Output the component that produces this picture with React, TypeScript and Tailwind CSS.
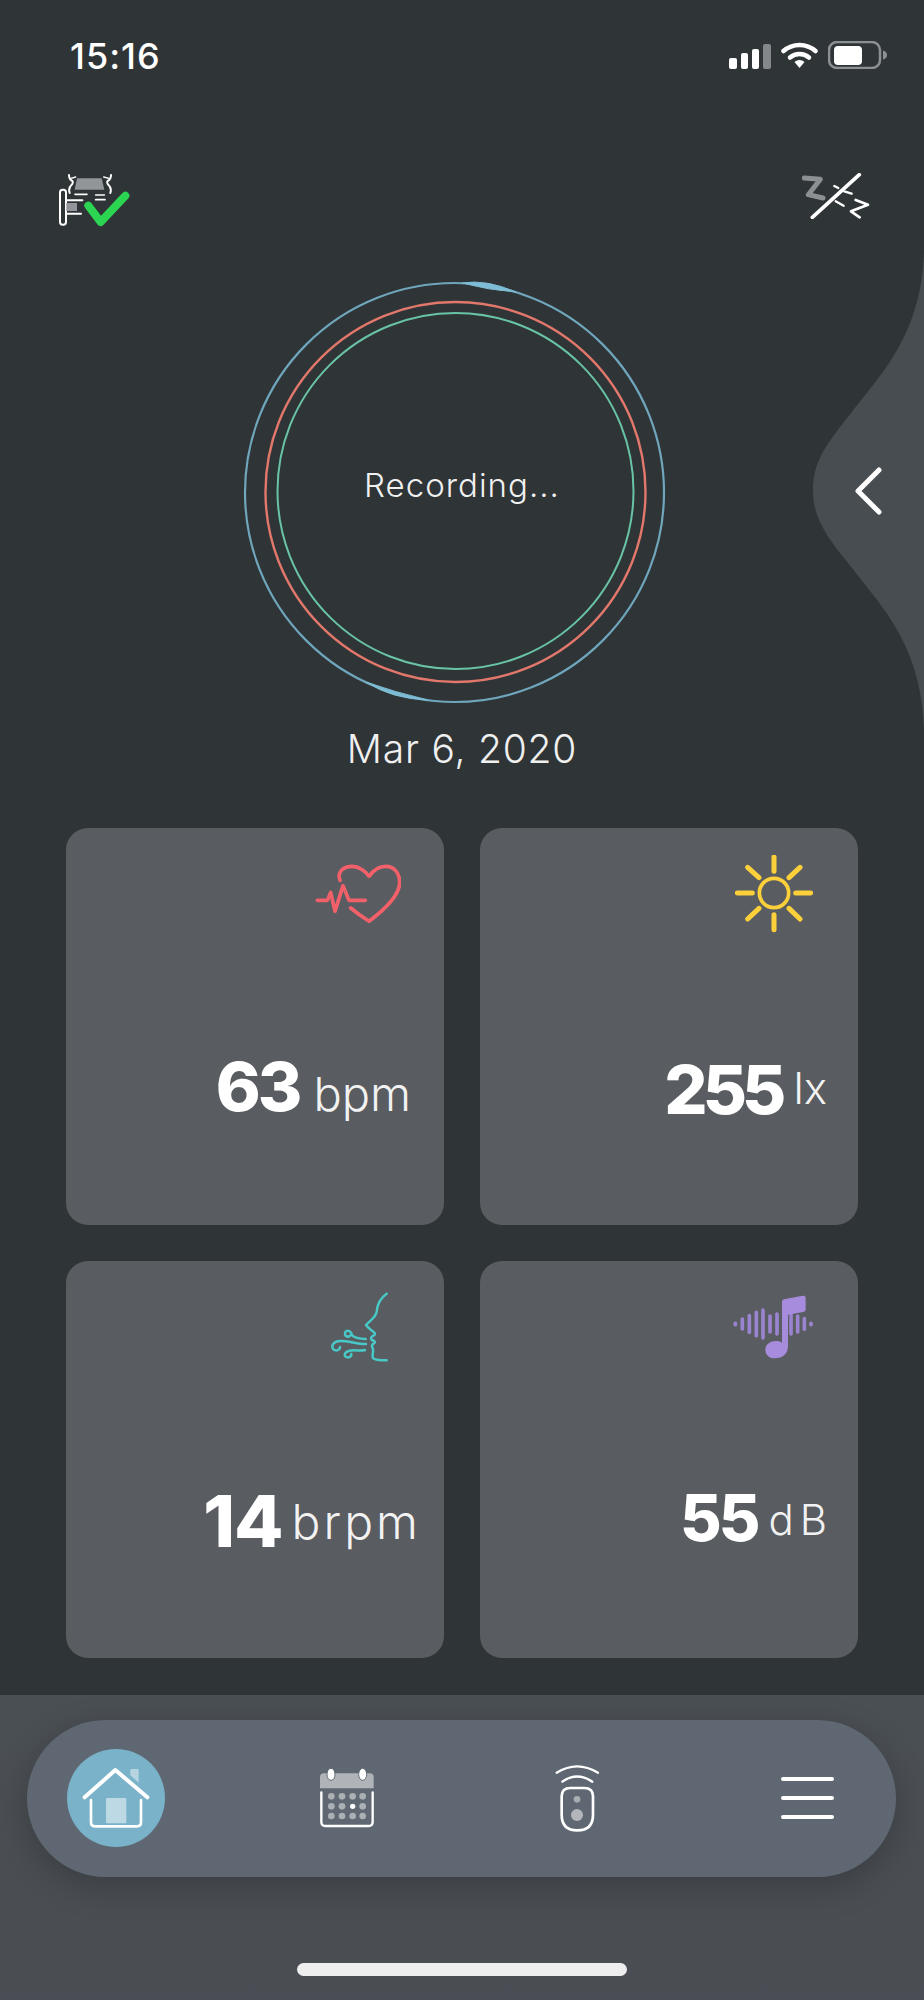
import React from "react";

const font = "[font-family:Inter,'Liberation_Sans',sans-serif]";

function StatusIcons() {
  return (
    <div className="flex items-center">
      <svg width="42" height="25" viewBox="0 0 42 25" className="mt-[2px]">
        <rect x="0" y="14" width="8" height="11" rx="2" fill="#fff" />
        <rect x="12" y="9" width="7" height="16" rx="2" fill="#fff" />
        <rect x="23" y="5" width="7" height="20" rx="2" fill="#fff" />
        <rect x="34" y="0" width="8" height="25" rx="2" fill="#85888b" />
      </svg>
      <svg width="37" height="26" viewBox="0 0 37 26" className="ml-[10px]">
        <path d="M2.5 9A24 24 0 0 1 34.500 9" stroke="#fff" strokeWidth="4.500" fill="none" strokeLinecap="round" />
        <path d="M9 15.500A14.500 14.500 0 0 1 28 15.500" stroke="#fff" strokeWidth="4.500" fill="none" strokeLinecap="round" />
        <path d="M18.500 26L13.500 20A7.500 7.500 0 0 1 23.500 20Z" fill="#fff" />
      </svg>
      <svg width="59" height="28" viewBox="0 0 59 28" className="ml-[10px]">
        <rect x="1" y="1" width="51" height="26" rx="8" stroke="#8d9093" strokeWidth="2.500" fill="none" />
        <rect x="6" y="5" width="28" height="19" rx="4" fill="#fff" />
        <path d="M55 9.500C58 10.500 59 12 59 14C59 16 58 17.500 55 18.500Z" fill="#8d9093" />
      </svg>
    </div>
  );
}

function BedCheck() {
  return (
    <svg width="74" height="58" viewBox="50 30 222 174" fill="none" strokeLinecap="round" strokeLinejoin="round">
      <path d="M110 52H184L192 86H103Z" fill="#929599" />
      <path d="M86 42C86 50 88 56 96 60C100 64 96 70 90 76C86 82 86 90 88 96" stroke="#fff" strokeWidth="6" />
      <path d="M212 42C212 50 210 56 202 60C198 64 202 70 208 76C212 82 212 90 210 96" stroke="#fff" strokeWidth="6" />
      <path d="M92 52L106 48M206 52L190 48" stroke="#fff" strokeWidth="4" />
      <path d="M104 100H140M166 102H192M166 116H194" stroke="#fff" strokeWidth="5" />
      <rect x="59" y="86" width="18" height="105" rx="8" stroke="#fff" strokeWidth="6" />
      <path d="M77 118H126M77 158H122" stroke="#fff" strokeWidth="6" />
      <rect x="78" y="126" width="32" height="24" fill="#929599" />
      <path d="M144 134L181 183L255 104" stroke="#2bd552" strokeWidth="24" />
    </svg>
  );
}

function SleepOff() {
  return (
    <svg width="68" height="46" viewBox="65 45 204 138" fill="none" strokeLinecap="round" strokeLinejoin="round">
      <path d="M72 60L120 64L84 110L128 120" stroke="#8c8f93" strokeWidth="15" />
      <path d="M96 178L237 50" stroke="#fff" strokeWidth="11" />
      <path d="M162 84L174 90M192 100L214 107M166 130L190 143" stroke="#fff" strokeWidth="7" />
      <path d="M226 126L263 140L212 160L238 178" stroke="#fff" strokeWidth="8" />
    </svg>
  );
}

function Rings() {
  return (
    <svg width="440" height="440" viewBox="235 273 440 440" fill="none" className="ml-[235px]">
      <circle cx="454.500" cy="492.500" r="209.500" stroke="#6fa6bc" strokeWidth="2.200" />
      <path d="M462 283Q486 279 516 292Q488 290 462 283Z" fill="#7dbcd4" stroke="#7dbcd4" strokeWidth="1" />
      <path d="M366 682Q392 699 428 700Q394 692 366 682Z" fill="#7dbcd4" stroke="#7dbcd4" strokeWidth="1" />
      <circle cx="455.500" cy="492" r="190" stroke="#e2786b" strokeWidth="2.400" />
      <circle cx="455.500" cy="491" r="178" stroke="#69c4a6" strokeWidth="2" />
    </svg>
  );
}

function Heart() {
  return (
    <svg width="86" height="60" viewBox="103 100 258 180" fill="none" stroke="#f2606a" strokeWidth="11" strokeLinecap="round" strokeLinejoin="round">
      <path d="M178 152C168 125 190 110 215 110C235 110 255 125 265 140C278 122 295 110 315 110C342 110 357 132 357 158C357 200 305 245 265 275C245 262 228 250 210 235" />
      <path d="M110 212H140L150 188L163 245L187 168L205 212H254" />
    </svg>
  );
}

function Sun() {
  return (
    <svg width="78" height="78" viewBox="103 78 234 234" fill="none" stroke="#fcd03a" strokeWidth="15" strokeLinecap="round">
      <circle cx="220" cy="192" r="44" strokeWidth="11" />
      <path d="M220 84V127M220 257V302M110 192H155M285 192H330M141 115L175 146M298 115L265 146M141 270L175 238M298 270L265 238" />
    </svg>
  );
}

function Breath() {
  return (
    <svg width="58" height="70" viewBox="90 66 174 210" fill="none" stroke="#48c8c6" strokeWidth="7.500" strokeLinecap="round" strokeLinejoin="round">
      <path d="M260 71C240 85 232 100 230 125C228 142 212 150 198 165C205 175 215 180 222 187C227 191 225 196 218 198C212 201 212 206 216 210C222 212 228 216 222 220C216 222 214 228 218 234C222 244 216 255 218 262C220 270 240 271 260 271" />
      <path d="M197 207C180 206 165 204 156 196C153 180 136 178 135 191C135 200 146 203 151 196" />
      <path d="M198 222C170 222 145 212 120 213C100 214 92 228 100 238C108 245 120 240 120 231" />
      <path d="M195 240C180 244 160 238 146 243C132 247 130 260 142 262C150 263 155 258 154 252" />
    </svg>
  );
}

function Music() {
  const bars: [number, number][] = [[76, 2], [97, 15], [118, 25], [139, 35], [159, 42], [180, 24], [201, 30], [243, 30], [263, 24], [283, 16], [303, 2]];
  return (
    <svg width="80" height="64" viewBox="69 46 240 192" fill="none">
      {bars.map(([x, h]) => (
        <path key={x} d={`M${x} ${133 - h}V${133 + h}`} stroke="#9a84d0" strokeWidth="11" strokeLinecap="round" />
      ))}
      <path d="M216 66Q216 60 222 59L278 48Q287 47 287 55V90Q287 96 280 97L234 105V200C234 222 218 236 195 236C176 236 166 224 166 210C166 194 182 184 198 184C206 184 212 186 216 189Z" fill="#a78bdc" />
    </svg>
  );
}

function HomeIcon() {
  return (
    <div className="w-[98px] h-[98px] rounded-full bg-[#7ab3c9]">
      <svg width="98" height="98" viewBox="200 205 294 294" fill="none" strokeLinecap="round" strokeLinejoin="round">
        <path d="M390 268Q390 265 394 265H411Q415 265 415 269V306L390 284Z" fill="#fff" fillOpacity="0.45" />
        <rect x="317" y="352" width="61" height="76" rx="3" fill="#fff" fillOpacity="0.5" />
        <path d="M272 358V425Q272 437 284 437H410Q422 437 422 425V358" stroke="#fff" strokeWidth="8" />
        <path d="M253 350L345 268L441 350" stroke="#fff" strokeWidth="12" />
      </svg>
    </div>
  );
}

function CalendarIcon() {
  const xs = [995, 1027, 1059, 1089];
  const ys = [347, 377, 406];
  return (
    <svg width="56" height="60" viewBox="958 262 168 180" fill="none">
      <path d="M961 323V290Q961 278 973 278H1110Q1122 278 1122 290V323Z" fill="#b0b4b8" />
      <path d="M965 335V424Q965 436 977 436H1107Q1119 436 1119 424V335" stroke="#fff" strokeWidth="7" strokeLinecap="round" />
      <ellipse cx="994" cy="281" rx="12" ry="18" fill="#fff" stroke="#5f6872" strokeWidth="3" />
      <ellipse cx="1089" cy="281" rx="12" ry="18" fill="#fff" stroke="#5f6872" strokeWidth="3" />
      {ys.map((y) => xs.map((x) => (
        <circle key={`${x}-${y}`} cx={x} cy={y} r={x === 1059 && y === 377 ? 8 : 10} fill={x === 1059 && y === 377 ? "#fff" : "#abb0b5"} />
      )))}
    </svg>
  );
}

function RemoteIcon() {
  return (
    <svg width="44" height="70" viewBox="284 245 132 210" fill="none" strokeLinecap="round">
      <path d="M289 274Q350 236 413 274" stroke="#fff" strokeWidth="7" />
      <path d="M306 301Q350 270 396 301" stroke="#fff" strokeWidth="7" />
      <path d="M304 345Q304 320 330 320H372Q398 320 398 345V400Q398 447 351 447Q304 447 304 400Z" stroke="#fff" strokeWidth="8" />
      <circle cx="350" cy="354" r="10" fill="#a8adb2" />
      <circle cx="350" cy="401" r="18" fill="#b3b7bb" />
    </svg>
  );
}

type Card = { icon: React.ReactNode; iconBox: string; num: string; unit: string; numClass: string; unitClass: string; rowClass: string };

const cards: Card[] = [
  { icon: <Heart />, iconBox: "pt-[35px] pr-[43px]", num: "63", unit: "bpm", numClass: "text-[68px] tracking-[-3px]", unitClass: "text-[47px] ml-[14px] mb-[3px]", rowClass: "pr-[33px] pb-[105px]" },
  { icon: <Sun />, iconBox: "pt-[27px] pr-[45px]", num: "255", unit: "lx", numClass: "text-[68px] tracking-[-5px]", unitClass: "text-[44px] ml-[12px] mb-[13px]", rowClass: "pr-[31px] pb-[102px]" },
  { icon: <Breath />, iconBox: "pt-[31px] pr-[56px]", num: "14", unit: "brpm", numClass: "text-[72px] tracking-[-1px]", unitClass: "text-[48px] tracking-[3px] ml-[9px] mb-[11px]", rowClass: "pr-[23px] pb-[101px]" },
  { icon: <Music />, iconBox: "pt-[34px] pr-[45px]", num: "55", unit: "dB", numClass: "text-[64px] tracking-[-3px]", unitClass: "text-[42px] tracking-[6px] ml-[11px] mb-[9px]", rowClass: "pr-[25px] pb-[108px]" },
];

export default function App() {
  return (
    <div className={`relative w-[924px] h-[2000px] overflow-hidden bg-[#2f3437] text-white ${font}`}>
      <svg width="111" height="480" viewBox="813 250 111 480" className="absolute right-0 top-[250px]">
        <path d="M924 250C922 335 880 375 852 412C826 444 813 462 813 490C813 518 826 536 852 568C880 605 922 645 924 730Z" fill="#484d52" />
      </svg>
      <svg width="30" height="50" viewBox="0 0 30 50" fill="none" className="absolute left-[853px] top-[466px]">
        <path d="M26 4L5 25L26 46" stroke="#fff" strokeWidth="5" strokeLinecap="round" strokeLinejoin="round" />
      </svg>

      <div className="pt-[41px] pl-[70px] pr-[37px] h-[69px] flex justify-between items-start">
        <span className="mt-[1px] text-[36px] font-medium leading-[28px] tracking-[1px] text-white">15:16</span>
        <StatusIcons />
      </div>

      <div className="mt-[102px] pl-[57px] pr-[54px] h-[58px] flex justify-between items-start">
        <BedCheck />
        <div className="mt-[2px]"><SleepOff /></div>
      </div>

      <div className="relative mt-[44px] h-[440px]">
        <Rings />
        <div className="absolute left-0 right-0 top-[192px] text-center text-[33px] leading-[40px] tracking-[1px] font-light text-[#f0f0f0]">Recording...</div>
      </div>

      <div className="mt-[16px] text-center text-[39px] leading-[39px] tracking-[0.8px] font-light text-[#f0f0f0]">Mar 6, 2020</div>

      <div className="mt-[60px] px-[66px] grid grid-cols-2 gap-[36px]">
        {cards.map((c) => (
          <div key={c.num} className="h-[397px] rounded-[22px] bg-[#595c60] flex flex-col justify-between">
            <div className={`flex justify-end ${c.iconBox}`}>{c.icon}</div>
            <div className={`flex justify-end items-end ${c.rowClass}`}>
              <span className={`${c.numClass} leading-none font-extrabold text-white`}>{c.num}</span>
              <span className={`${c.unitClass} leading-none font-light text-[#f2f2f2]`}>{c.unit}</span>
            </div>
          </div>
        ))}
      </div>

      <div className="absolute left-0 right-0 bottom-0 h-[305px] bg-gradient-to-b from-[#4a4f53] to-[#4a4e54] pt-[25px]">
        <div className="ml-[27px] w-[869px] h-[157px] rounded-full bg-[#5f6872] shadow-[0_10px_34px_rgba(0,0,0,0.22)] flex items-center pl-[40px] pb-[2px]">
          <HomeIcon />
          <div className="ml-[154px]"><CalendarIcon /></div>
          <div className="ml-[180px]"><RemoteIcon /></div>
          <div className="ml-[182px] w-[53px] flex flex-col gap-[15px]">
            <div className="h-[4px] rounded-full bg-white" />
            <div className="h-[4px] rounded-full bg-white" />
            <div className="h-[4px] rounded-full bg-white" />
          </div>
        </div>
        <div className="mt-[86px] mx-auto w-[330px] h-[13px] rounded-full bg-[#eeeeee]" />
      </div>
    </div>
  );
}
